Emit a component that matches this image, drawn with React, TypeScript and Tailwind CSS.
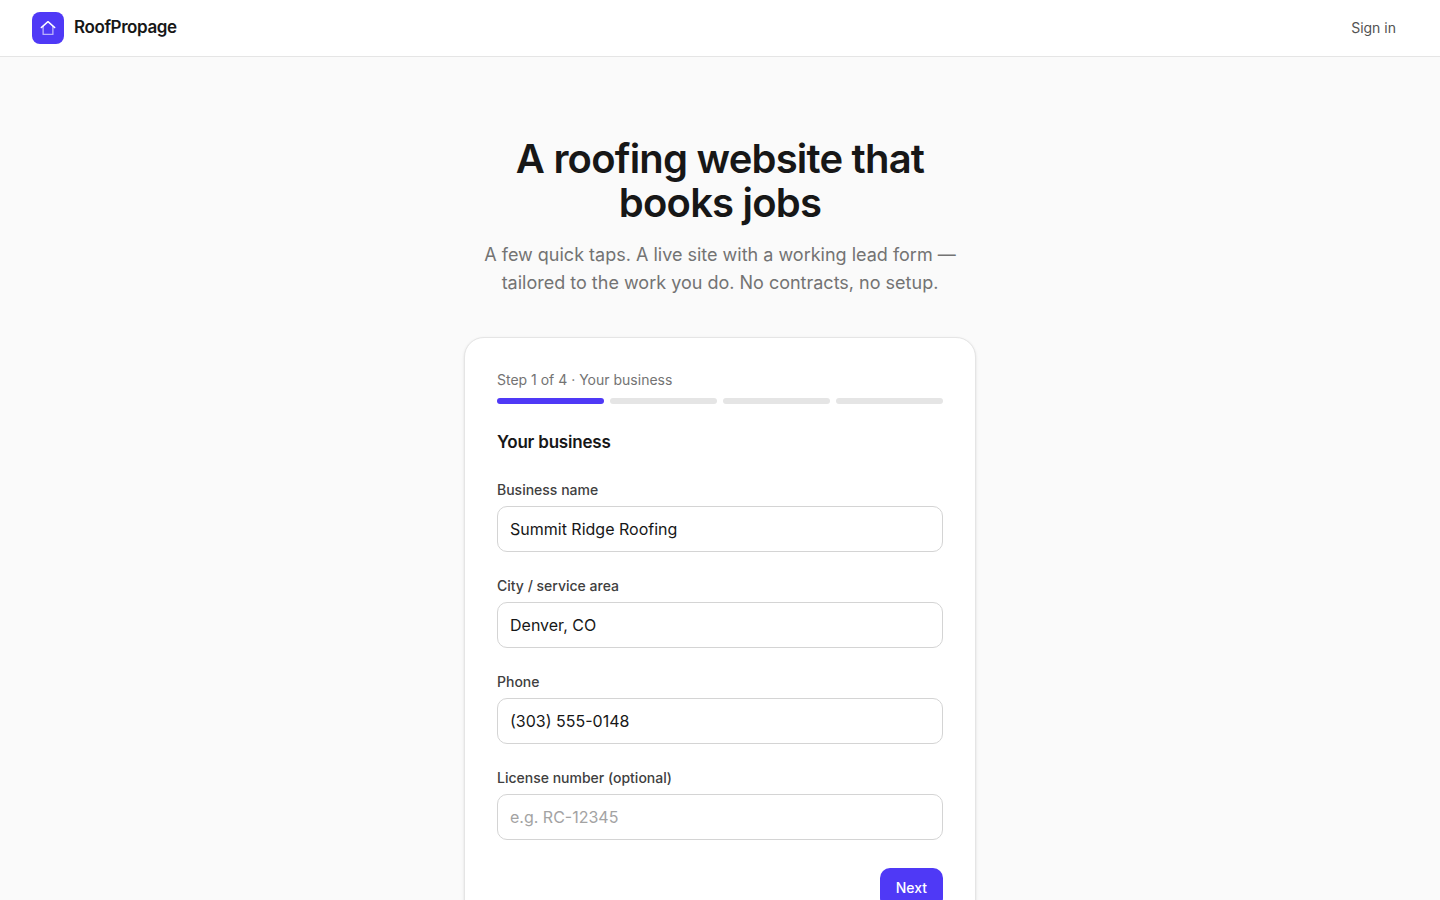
const fields = [
  { label: 'Business name', value: 'Summit Ridge Roofing' },
  { label: 'City / service area', value: 'Denver, CO' },
  { label: 'Phone', value: '(303) 555-0148' },
  { label: 'License number (optional)', value: '', placeholder: 'e.g. RC-12345' },
];

export default function App() {
  return (
    <div className="h-[900px] overflow-hidden bg-[#fafafa] font-['Inter',sans-serif] text-[#171717] antialiased">
      <header className="h-[57px] bg-white border-b border-[#e5e5e5] pl-8 pr-11 flex items-center justify-between">
        <div className="flex items-center gap-[10px]">
          <div className="w-8 h-8 rounded-lg bg-[#4f39f6] flex items-center justify-center">
            <svg width="18" height="18" viewBox="0 0 24 24" fill="none" stroke="white" strokeWidth="1.8" strokeLinecap="round" strokeLinejoin="round">
              <path d="M3 11.5 12 3.5l9 8" />
              <path d="M5.5 9.5V20.5h13V9.5" strokeOpacity="0.6" />
            </svg>
          </div>
          <span className="text-[17px] font-semibold tracking-[-0.4px]">RoofPropage</span>
        </div>
        <button className="text-sm text-[#525252]">Sign in</button>
      </header>

      <main className="flex flex-col items-center pt-[80px]">
        <h1 className="w-[512px] text-center text-[40px] leading-[44px] font-semibold tracking-[-0.8px]">
          A roofing website that<br />books jobs
        </h1>
        <p className="mt-[16px] text-center text-lg leading-7 text-[#737373]">
          A few quick taps. A live site with a working lead form —<br />
          tailored to the work you do. No contracts, no setup.
        </p>

        <section className="mt-[40px] w-[512px] shrink-0 bg-white border border-[#e5e5e5] rounded-[20px] p-8 shadow-sm">
          <div className="text-sm leading-5 text-[#737373]">Step 1 of 4 · Your business</div>
          <div className="mt-2 flex gap-[6px]">
            <div className="h-[6px] flex-1 rounded-full bg-[#4f39f6]" />
            <div className="h-[6px] flex-1 rounded-full bg-[#e5e5e5]" />
            <div className="h-[6px] flex-1 rounded-full bg-[#e5e5e5]" />
            <div className="h-[6px] flex-1 rounded-full bg-[#e5e5e5]" />
          </div>

          <h2 className="mt-[24px] text-[17px] leading-7 font-semibold tracking-[-0.2px]">Your business</h2>

          <div className="mt-[24px] flex flex-col gap-[24px]">
            {fields.map(f => (
              <div key={f.label}>
                <label className="block text-[14px] leading-5 font-medium text-[#404040] mb-[6px]">{f.label}</label>
                <input
                  readOnly
                  value={f.value}
                  placeholder={f.placeholder}
                  className="block w-full h-[46px] px-3 rounded-[10px] border border-[#d4d4d4] bg-white text-base text-[#171717] placeholder:text-[#a3a3a3] outline-none"
                />
              </div>
            ))}
          </div>

          <div className="mt-[28px] flex justify-end">
            <button className="h-10 px-4 rounded-[10px] bg-[#4f39f6] text-white text-sm font-medium">Next</button>
          </div>
        </section>
      </main>
    </div>
  );
}
